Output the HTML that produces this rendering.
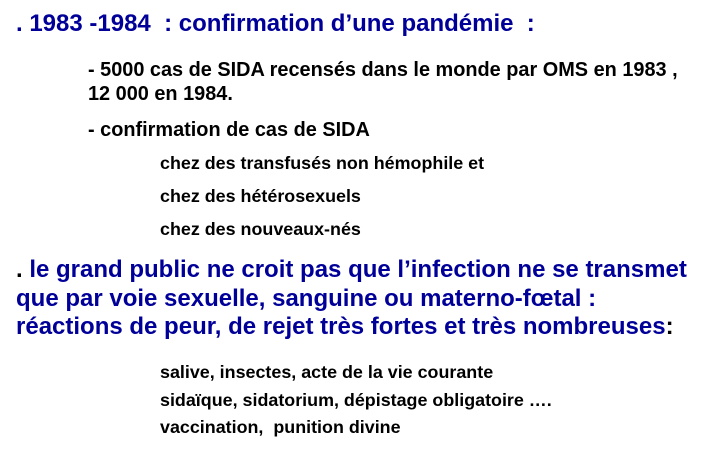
<!DOCTYPE html>
<html><head><meta charset="utf-8"><style>
body{margin:0;width:706px;height:449px;background:#fff;position:relative;overflow:hidden;font-family:"Liberation Sans",Arial,sans-serif;font-weight:bold;}
div{position:absolute;white-space:pre;}
.b{color:#000099;font-size:24px;line-height:24px;}
.s{color:#000;font-size:19.9px;line-height:20px;}
.t{color:#000;font-size:17.9px;line-height:18px;}
</style></head><body>
<div class="b" style="left:16px;top:12px">. 1983 -1984  : confirmation d’une pandémie  :</div>
<div class="s" style="left:88px;top:60px">- 5000 cas de SIDA recensés dans le monde par OMS en 1983 ,</div>
<div class="s" style="left:88px;top:84px">12 000 en 1984.</div>
<div class="s" style="left:88px;top:120px">- confirmation de cas de SIDA</div>
<div class="t" style="left:160px;top:154px">chez des transfusés non hémophile et</div>
<div class="t" style="left:160px;top:187px">chez des hétérosexuels</div>
<div class="t" style="left:160px;top:220px">chez des nouveaux-nés</div>
<div class="b" style="left:16px;top:258px"><span style="color:#000">.</span> le grand public ne croit pas que l’infection ne se transmet</div>
<div class="b" style="left:16px;top:287px">que par voie sexuelle, sanguine ou materno-fœtal :</div>
<div class="b" style="left:16px;top:315px">réactions de peur, de rejet très fortes et très nombreuses<span style="color:#000">:</span></div>
<div class="t" style="left:160px;top:363px">salive, insectes, acte de la vie courante</div>
<div class="t" style="left:160px;top:391px">sidaïque, sidatorium, dépistage obligatoire ….</div>
<div class="t" style="left:160px;top:418px">vaccination,  punition divine</div>
</body></html>
